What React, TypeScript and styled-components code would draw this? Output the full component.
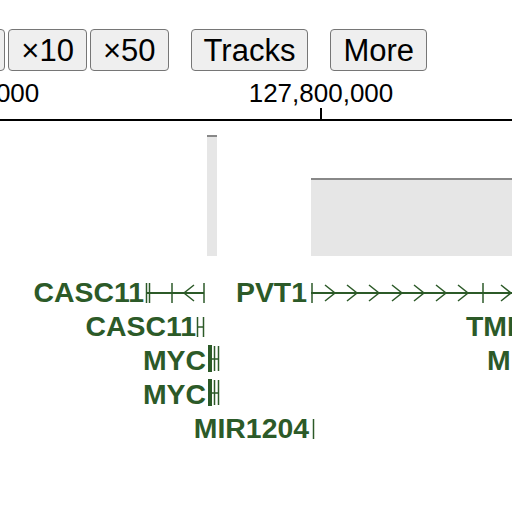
import styled, { createGlobalStyle } from 'styled-components';

const GlobalStyle = createGlobalStyle`
  html, body {
    margin: 0;
    padding: 0;
    background: #ffffff;
  }
  body {
    font-family: 'Liberation Sans', Arial, sans-serif;
  }
`;

const GENE = '#2c5a28';

function App() {
  return (
    <>
      <GlobalStyle />
      <Page>
        <Toolbar>
          <ZoomGroup>
            <Button>×5</Button>
            <Button>×10</Button>
            <Button>×50</Button>
          </ZoomGroup>
          <Button>Tracks</Button>
          <Button>More</Button>
        </Toolbar>
        <Ruler />
        <CoverageTrack />
        <GeneTrack />
      </Page>
    </>
  );
}

export default App;

function Ruler() {
  return (
    <RulerSvg width={512} height={52} viewBox="0 71 512 52">
      <text x={-33} y={102} textAnchor="middle" fontSize={26} fill="#000">
        127,700,000
      </text>
      <text x={321} y={102} textAnchor="middle" fontSize={26} fill="#000">
        127,800,000
      </text>
      <rect x={320} y={108} width={2} height={12} fill="#000" />
      <rect x={0} y={119} width={512} height={2} fill="#000" />
    </RulerSvg>
  );
}

function CoverageTrack() {
  return (
    <TrackSvg width={512} height={135} viewBox="0 123 512 135">
      <rect x={207} y={135} width={10} height={121} fill="#e6e6e6" />
      <rect x={207} y={135} width={10} height={2} fill="#888888" />
      <rect x={311} y={178} width={201} height={78} fill="#e6e6e6" />
      <rect x={311} y={178} width={201} height={2} fill="#888888" />
    </TrackSvg>
  );
}

const pvtArrows = [335, 357, 379, 402, 424, 446, 468, 511];

function GeneTrack() {
  return (
    <TrackSvg width={512} height={200} viewBox="0 258 512 200">
      <g fontSize={28.4} fontWeight="bold" fill={GENE}>
        <text x={144} y={302} textAnchor="end">CASC11</text>
        <text x={307} y={302} textAnchor="end">PVT1</text>
        <text x={196} y={336} textAnchor="end">CASC11</text>
        <text x={466} y={336}>TMEM75</text>
        <text x={206} y={370} textAnchor="end">MYC</text>
        <text x={487} y={370}>MIR1208</text>
        <text x={206} y={404} textAnchor="end">MYC</text>
        <text x={309} y={438} textAnchor="end">MIR1204</text>
      </g>
      <g stroke={GENE} strokeWidth={2} fill="none">
        {/* CASC11 row 1 */}
        <line x1={146} y1={293} x2={204} y2={293} />
        <line x1={146.5} y1={283} x2={146.5} y2={303} strokeWidth={1.5} />
        <line x1={149.5} y1={283} x2={149.5} y2={303} strokeWidth={1.5} />
        <line x1={172} y1={283} x2={172} y2={303} strokeWidth={1.5} />
        <polyline points="194,285 184,293 194,301" strokeWidth={1.5} />
        <line x1={204} y1={283} x2={204} y2={303} strokeWidth={1.5} />
        {/* CASC11 row 2 */}
        <line x1={197.5} y1={317} x2={197.5} y2={337} strokeWidth={1.5} />
        <line x1={203.5} y1={317} x2={203.5} y2={337} strokeWidth={1.5} />
        <line x1={197} y1={327} x2={204} y2={327} strokeWidth={1.5} />
        {/* PVT1 */}
        <line x1={311} y1={293} x2={512} y2={293} />
        <line x1={312} y1={283} x2={312} y2={303} strokeWidth={1.5} />
        <line x1={483} y1={283} x2={483} y2={303} strokeWidth={1.5} />
        {pvtArrows.map((tip) => (
          <polyline
            key={tip}
            points={`${tip - 10},285 ${tip},293 ${tip - 10},301`}
            strokeWidth={1.5}
          />
        ))}
        {/* MYC rows */}
        {[370, 404].map((base) => (
          <g key={base}>
            <rect x={208} y={base - 25} width={4} height={27} fill={GENE} stroke="none" />
            <line x1={214.5} y1={base - 24} x2={214.5} y2={base + 1} strokeWidth={1.5} />
            <line x1={218.5} y1={base - 24} x2={218.5} y2={base + 1} strokeWidth={1.5} />
            <line x1={212} y1={base - 11} x2={219} y2={base - 11} strokeWidth={1.5} />
          </g>
        ))}
        {/* MIR1204 */}
        <line x1={313.5} y1={419} x2={313.5} y2={439} strokeWidth={1.5} />
      </g>
    </TrackSvg>
  );
}

const Page = styled.div`
  position: relative;
  width: 512px;
  height: 512px;
  overflow: hidden;
  display: flex;
  flex-direction: column;
`;

const Toolbar = styled.div`
  display: flex;
  flex-direction: row;
  align-items: center;
  gap: 22px;
  margin-top: 29px;
  margin-left: -56px;
`;

const ZoomGroup = styled.div`
  display: flex;
  flex-direction: row;
  gap: 3px;
`;

const Button = styled.button`
  flex: none;
  height: 42px;
  padding: 0 12px;
  border: 1.5px solid #767676;
  border-radius: 4px;
  background: #efefef;
  color: #000;
  font-family: 'Liberation Sans', Arial, sans-serif;
  font-size: 31px;
  line-height: 1;
  white-space: nowrap;
`;

const RulerSvg = styled.svg`
  display: block;
  font-family: 'Liberation Sans', Arial, sans-serif;
  flex: none;
`;

const TrackSvg = styled.svg`
  display: block;
  font-family: 'Liberation Sans', Arial, sans-serif;
  flex: none;
`;
